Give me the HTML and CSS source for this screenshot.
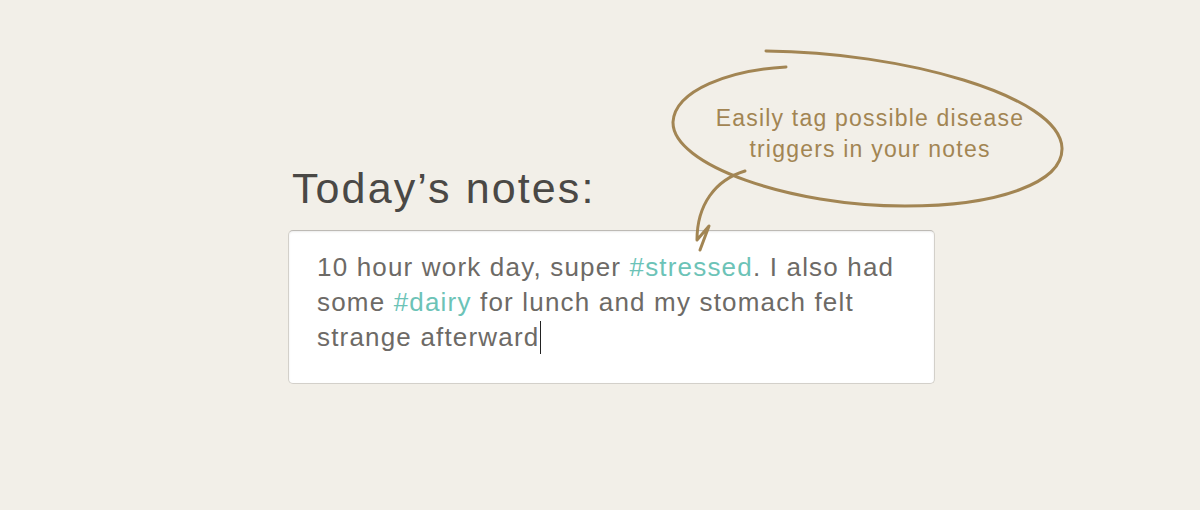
FILE: index.html
```html
<!DOCTYPE html>
<html>
<head>
<meta charset="utf-8">
<link rel="stylesheet" href="styles.css">
</head>
<body>
<main class="stage">
  <section class="notes">
    <h1 class="notes-title">Today’s notes:</h1>
    <div class="notes-box">
      <p class="notes-text">10 hour work day, super <span class="tag">#stressed</span>. I also had some <span class="tag">#dairy</span> for lunch and my stomach felt strange afterward<span class="caret"></span></p>
    </div>
  </section>
  <div class="callout">
    <svg class="callout-loop" width="1200" height="510" viewBox="0 0 1200 510" aria-hidden="true">
      <path d="M786,67 C730,70 675,90 673,122 C672,165 790,206 905,206 C1000,206 1063,182 1062,148 C1060,95 900,52 766,51" />
      <path d="M745,171 C715,180 697,205 697,240 L709,226 L700,250" />
    </svg>
    <p class="callout-text">Easily tag possible disease<br>triggers in your notes</p>
  </div>
</main>
</body>
</html>
```
FILE: styles.css
```css
html, body {
  margin: 0;
  padding: 0;
}
body {
  background: #f2efe8;
  width: 1200px;
  height: 510px;
  overflow: hidden;
  font-family: "Liberation Sans", Arial, sans-serif;
}
.stage {
  position: relative;
  width: 1200px;
  height: 510px;
}
.notes {
  display: flex;
  flex-direction: column;
  padding-top: 160px;
  margin-left: 288px;
  width: 647px;
}
.notes-title {
  margin: 0 0 14px 4px;
  font-weight: 400;
  font-size: 43px;
  line-height: 56px;
  letter-spacing: 2.1px;
  color: #4a4845;
}
.notes-box {
  background: #fff;
  border: 1px solid #d3d0ca;
  border-top-color: #bdbab5;
  border-radius: 5px;
  box-shadow: inset 0 1px 2px rgba(0,0,0,0.08);
  box-sizing: border-box;
  height: 154px;
  padding: 19px 30px 0 28px;
}
.notes-text {
  margin: 0;
  font-size: 26px;
  line-height: 35px;
  letter-spacing: 1.18px;
  color: #6d6a66;
}
.tag {
  color: #6cc3b7;
}
.caret {
  display: inline-block;
  width: 1px;
  height: 33px;
  background: #222;
  vertical-align: -8px;
  margin-left: 1px;
}
.callout {
  position: absolute;
  left: 0;
  top: 0;
  width: 1200px;
  height: 510px;
  pointer-events: none;
}
.callout-loop {
  position: absolute;
  left: 0;
  top: 0;
}
.callout-loop path {
  fill: none;
  stroke: #a28553;
  stroke-width: 3;
  stroke-linecap: round;
  stroke-linejoin: round;
}
.callout-text {
  position: absolute;
  left: 670px;
  top: 103px;
  width: 400px;
  margin: 0;
  text-align: center;
  font-size: 23px;
  line-height: 31px;
  letter-spacing: 1.2px;
  color: #a28553;
}
```
